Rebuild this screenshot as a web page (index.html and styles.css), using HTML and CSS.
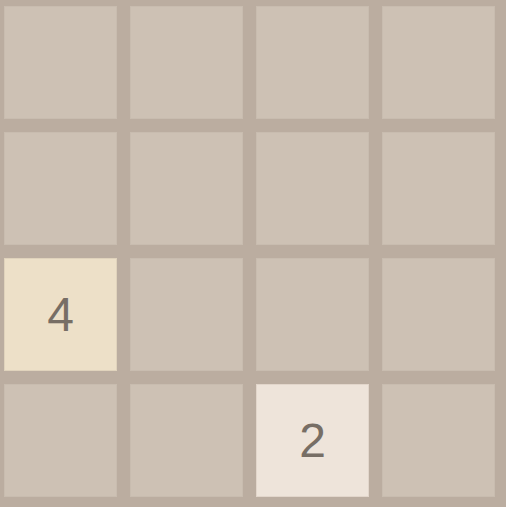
FILE: index.html
```html
<!DOCTYPE html>
<html lang="en">
<head>
    <meta charset="UTF-8">
    <meta name="viewport" content="width=device-width, initial-scale=1.0">
    <title>2048</title>
    <link rel="stylesheet" href="styles.css">
</head>
<body>
    <div class="board">
        <div class="cell"></div>
        <div class="cell"></div>
        <div class="cell"></div>
        <div class="cell"></div>

        <div class="cell"></div>
        <div class="cell"></div>
        <div class="cell"></div>
        <div class="cell"></div>

        <div class="cell tile-4">4</div>
        <div class="cell"></div>
        <div class="cell"></div>
        <div class="cell"></div>

        <div class="cell"></div>
        <div class="cell"></div>
        <div class="cell tile-2">2</div>
        <div class="cell"></div>
    </div>
</body>
</html>
```

FILE: styles.css
```css
html, body {
    margin: 0;
    padding: 0;
    background-color: #bbada0;
}

.board {
    width: 506px;
    height: 507px;
    box-sizing: border-box;
    padding: 6px 11px 10px 4px;
    display: grid;
    grid-template-columns: repeat(4, 113px);
    grid-template-rows: repeat(4, 113px);
    gap: 13px;
    background-color: #bbada0;
    font-family: "Liberation Sans", Arial, sans-serif;
}

.cell {
    box-sizing: border-box;
    border: 1px solid #c8bcaf;
    background-color: #cdc1b4;
    display: flex;
    align-items: center;
    justify-content: center;
    font-size: 48px;
    color: #776e65;
}

.tile-2 {
    background-color: #eee4da;
    border-color: #e2d6cb;
}

.tile-4 {
    background-color: #ede0c8;
    border-color: #e0d3bc;
}
```
